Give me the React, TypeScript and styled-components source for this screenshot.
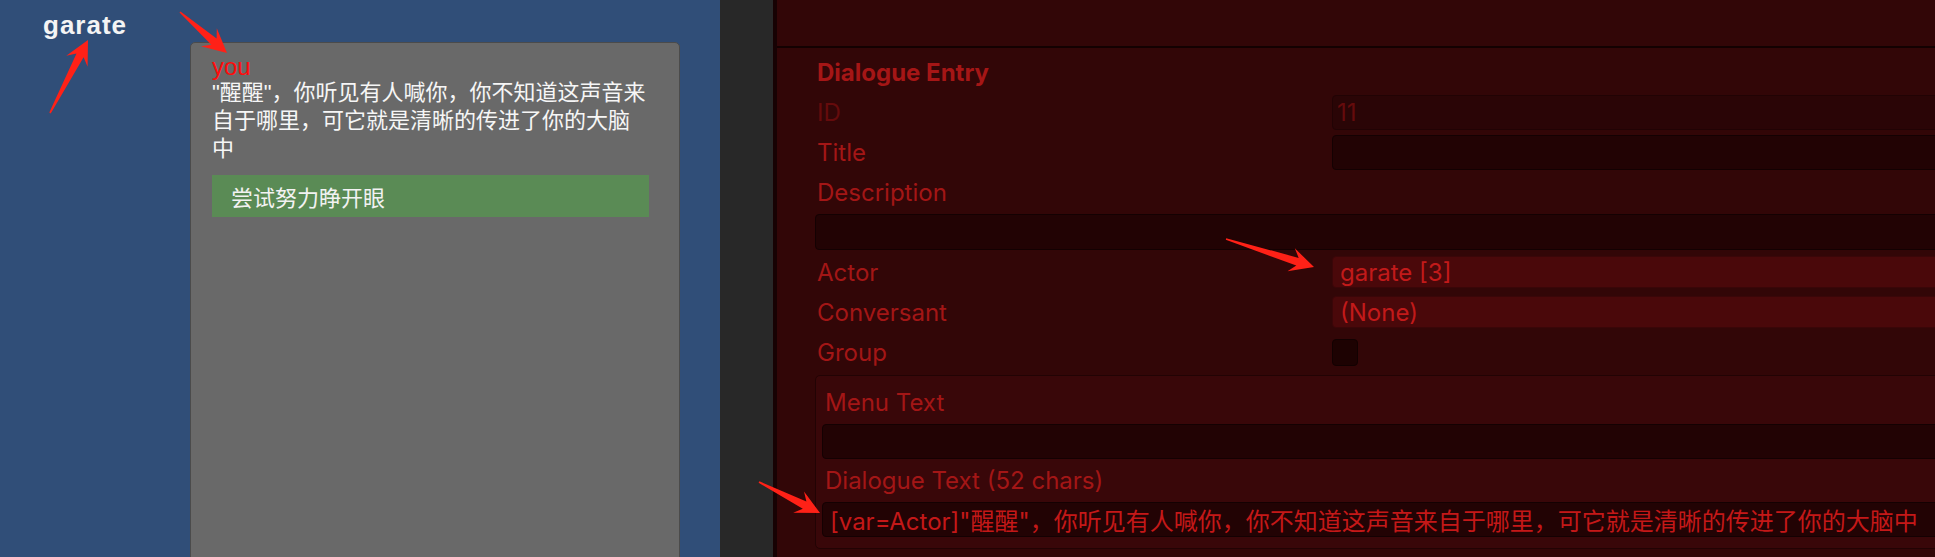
import styled, { createGlobalStyle } from "styled-components";

const GlobalStyle = createGlobalStyle`
    html, body {
        margin: 0;
        padding: 0;
        background: #320607;
        overflow: hidden;
    }
    * {
        box-sizing: border-box;
    }
`;

type Arrow = { tail: [number, number]; tip: [number, number] };

// annotation arrows drawn over the screenshot
const arrows: Arrow[] = [
    { tail: [50, 113], tip: [88, 40] },
    { tail: [180, 12], tip: [227, 53] },
    { tail: [1226, 239], tip: [1314, 267] },
    { tail: [759, 482], tip: [820, 513] },
];

function arrowPoints({ tail, tip }: Arrow) {
    const [tx, ty] = tail;
    const [px, py] = tip;
    const len = Math.hypot(px - tx, py - ty);
    const dx = (px - tx) / len;
    const dy = (py - ty) / len;
    const nx = -dy;
    const ny = dx;
    const L = 24;
    const W = 12;
    const w = 4;
    const pt = (along: number, side: number) =>
        `${(px - dx * along + nx * side).toFixed(1)},${(py - dy * along + ny * side).toFixed(1)}`;
    return [
        pt(0, 0),
        pt(L, W),
        pt(L * 0.72, w),
        pt(len, 0.8),
        pt(len, -0.8),
        pt(L * 0.72, -w),
        pt(L, -W),
    ].join(" ");
}

export default function App() {
    return (
        <Page>
            <GlobalStyle />
            <GameView>
                <NameTag>garate</NameTag>
                <DialogueCard>
                    <Speaker>you</Speaker>
                    <Line>"醒醒"，你听见有人喊你，你不知道这声音来自于哪里，可它就是清晰的传进了你的大脑中</Line>
                    <Choice>尝试努力睁开眼</Choice>
                </DialogueCard>
            </GameView>
            <Gutter />
            <Inspector>
                <InspectorHeader />
                <Body>
                    <SectionTitle>Dialogue Entry</SectionTitle>
                    <Row>
                        <Label $disabled>ID</Label>
                        <Field $tone="disabled">11</Field>
                    </Row>
                    <Row>
                        <Label>Title</Label>
                        <Field $tone="text" />
                    </Row>
                    <Label>Description</Label>
                    <WideRow>
                        <Field $tone="text" $height={36} />
                    </WideRow>
                    <Row>
                        <Label>Actor</Label>
                        <Field $tone="popup" $height={32}>garate [3]</Field>
                    </Row>
                    <Row>
                        <Label>Conversant</Label>
                        <Field $tone="popup" $height={32}>(None)</Field>
                    </Row>
                    <Row>
                        <Label>Group</Label>
                        <Checkbox />
                    </Row>
                    <GroupBox>
                        <Label $inset>Menu Text</Label>
                        <Field $tone="text" $gap={2} />
                        <Label $inset $gap={1}>Dialogue Text (52 chars)</Label>
                        <Field $tone="text" $gap={2} $bright>
                            [var=Actor]"醒醒"，你听见有人喊你，你不知道这声音来自于哪里，可它就是清晰的传进了你的大脑中
                        </Field>
                    </GroupBox>
                </Body>
            </Inspector>
            <Annotations viewBox="0 0 1935 557">
                {arrows.map((a, i) => (
                    <polygon key={i} points={arrowPoints(a)} fill="#ff2117" />
                ))}
            </Annotations>
        </Page>
    );
}

const Page = styled.div`
    position: relative;
    display: flex;
    width: 1935px;
    height: 557px;
    overflow: hidden;
`;

const GameView = styled.div`
    display: flex;
    align-items: flex-start;
    width: 720px;
    flex-shrink: 0;
    padding: 12px 0 0 43px;
    background: #304e78;
`;

const NameTag = styled.div`
    width: 84px;
    font-family: "Liberation Sans", Arial, sans-serif;
    font-size: 26px;
    line-height: 26px;
    font-weight: 700;
    letter-spacing: 1px;
    color: #f4f4f4;
`;

const DialogueCard = styled.div`
    align-self: stretch;
    width: 490px;
    margin: 30px 0 -12px 63px;
    padding: 12px 30px 0 21px;
    background: #696969;
    border: 1px solid #4b4b4b;
    border-radius: 5px;
    font-family: "Liberation Sans", "Noto Sans CJK SC", sans-serif;
`;

const Speaker = styled.div`
    font-size: 24px;
    line-height: 24px;
    color: #ff0b0b;
`;

const Line = styled.div`
    font-size: 22px;
    line-height: 28px;
    color: #f6f6f6;
`;

const Choice = styled.div`
    display: flex;
    align-items: center;
    height: 42px;
    margin-top: 12px;
    padding-left: 19px;
    background: #5a8b55;
    font-size: 22px;
    color: #f2f2f2;
`;

const Gutter = styled.div`
    width: 53px;
    flex-shrink: 0;
    background: #282828;
`;

const Inspector = styled.div`
    flex: 1;
    min-width: 0;
    display: flex;
    flex-direction: column;
    overflow: hidden;
    background: #320607;
    border-left: 4px solid #170203;
    font-family: Inter, "Noto Sans CJK SC", sans-serif;
    font-size: 24px;
`;

const InspectorHeader = styled.div`
    height: 48px;
    flex-shrink: 0;
    border-bottom: 2px solid #130101;
`;

const Body = styled.div`
    display: flex;
    flex-direction: column;
    padding: 4px 0 0 38px;
    margin-right: -12px;
`;

const SectionTitle = styled.div`
    height: 40px;
    display: flex;
    align-items: center;
    padding-left: 2px;
    font-weight: 700;
    color: #a51616;
`;

const Row = styled.div`
    display: grid;
    grid-template-columns: 517px 1fr;
    align-items: center;
    height: 40px;
`;

const WideRow = styled.div`
    display: flex;
    align-items: center;
    height: 40px;
    & > * {
        flex: 1;
    }
`;

const Label = styled.div<{ $disabled?: boolean; $inset?: boolean; $gap?: number }>`
    height: 40px;
    display: flex;
    align-items: center;
    padding-left: ${(p) => (p.$inset ? 3 : 2)}px;
    margin-top: ${(p) => p.$gap ?? 0}px;
    color: ${(p) => (p.$disabled ? "#650b0c" : "#a31616")};
    white-space: nowrap;
`;

const tones = {
    disabled: { bg: "#2a0506", border: "#210304", color: "#650b0c" },
    text: { bg: "#220304", border: "#140102", color: "#a31616" },
    popup: { bg: "#4a080a", border: "#3a0608", color: "#c21a1a" },
};

const Field = styled.div<{ $tone: keyof typeof tones; $height?: number; $gap?: number; $bright?: boolean }>`
    height: ${(p) => p.$height ?? 35}px;
    margin-top: ${(p) => p.$gap ?? 0}px;
    display: flex;
    align-items: center;
    padding-left: ${(p) => (p.$tone === "disabled" ? 4 : 7)}px;
    background: ${(p) => tones[p.$tone].bg};
    border: 1px solid ${(p) => tones[p.$tone].border};
    border-radius: 4px;
    color: ${(p) => (p.$bright ? "#c41818" : tones[p.$tone].color)};
    white-space: nowrap;
    overflow: hidden;
`;

const Checkbox = styled.div`
    width: 26px;
    height: 27px;
    background: #1d0202;
    border: 1px solid #120101;
    border-radius: 4px;
`;

const GroupBox = styled.div`
    display: flex;
    flex-direction: column;
    margin-top: 3px;
    padding: 6px 0 11px 6px;
    background: #390709;
    border: 1px solid #220304;
    border-radius: 5px;
`;

const Annotations = styled.svg`
    position: absolute;
    left: 0;
    top: 0;
    width: 1935px;
    height: 557px;
    pointer-events: none;
`;
